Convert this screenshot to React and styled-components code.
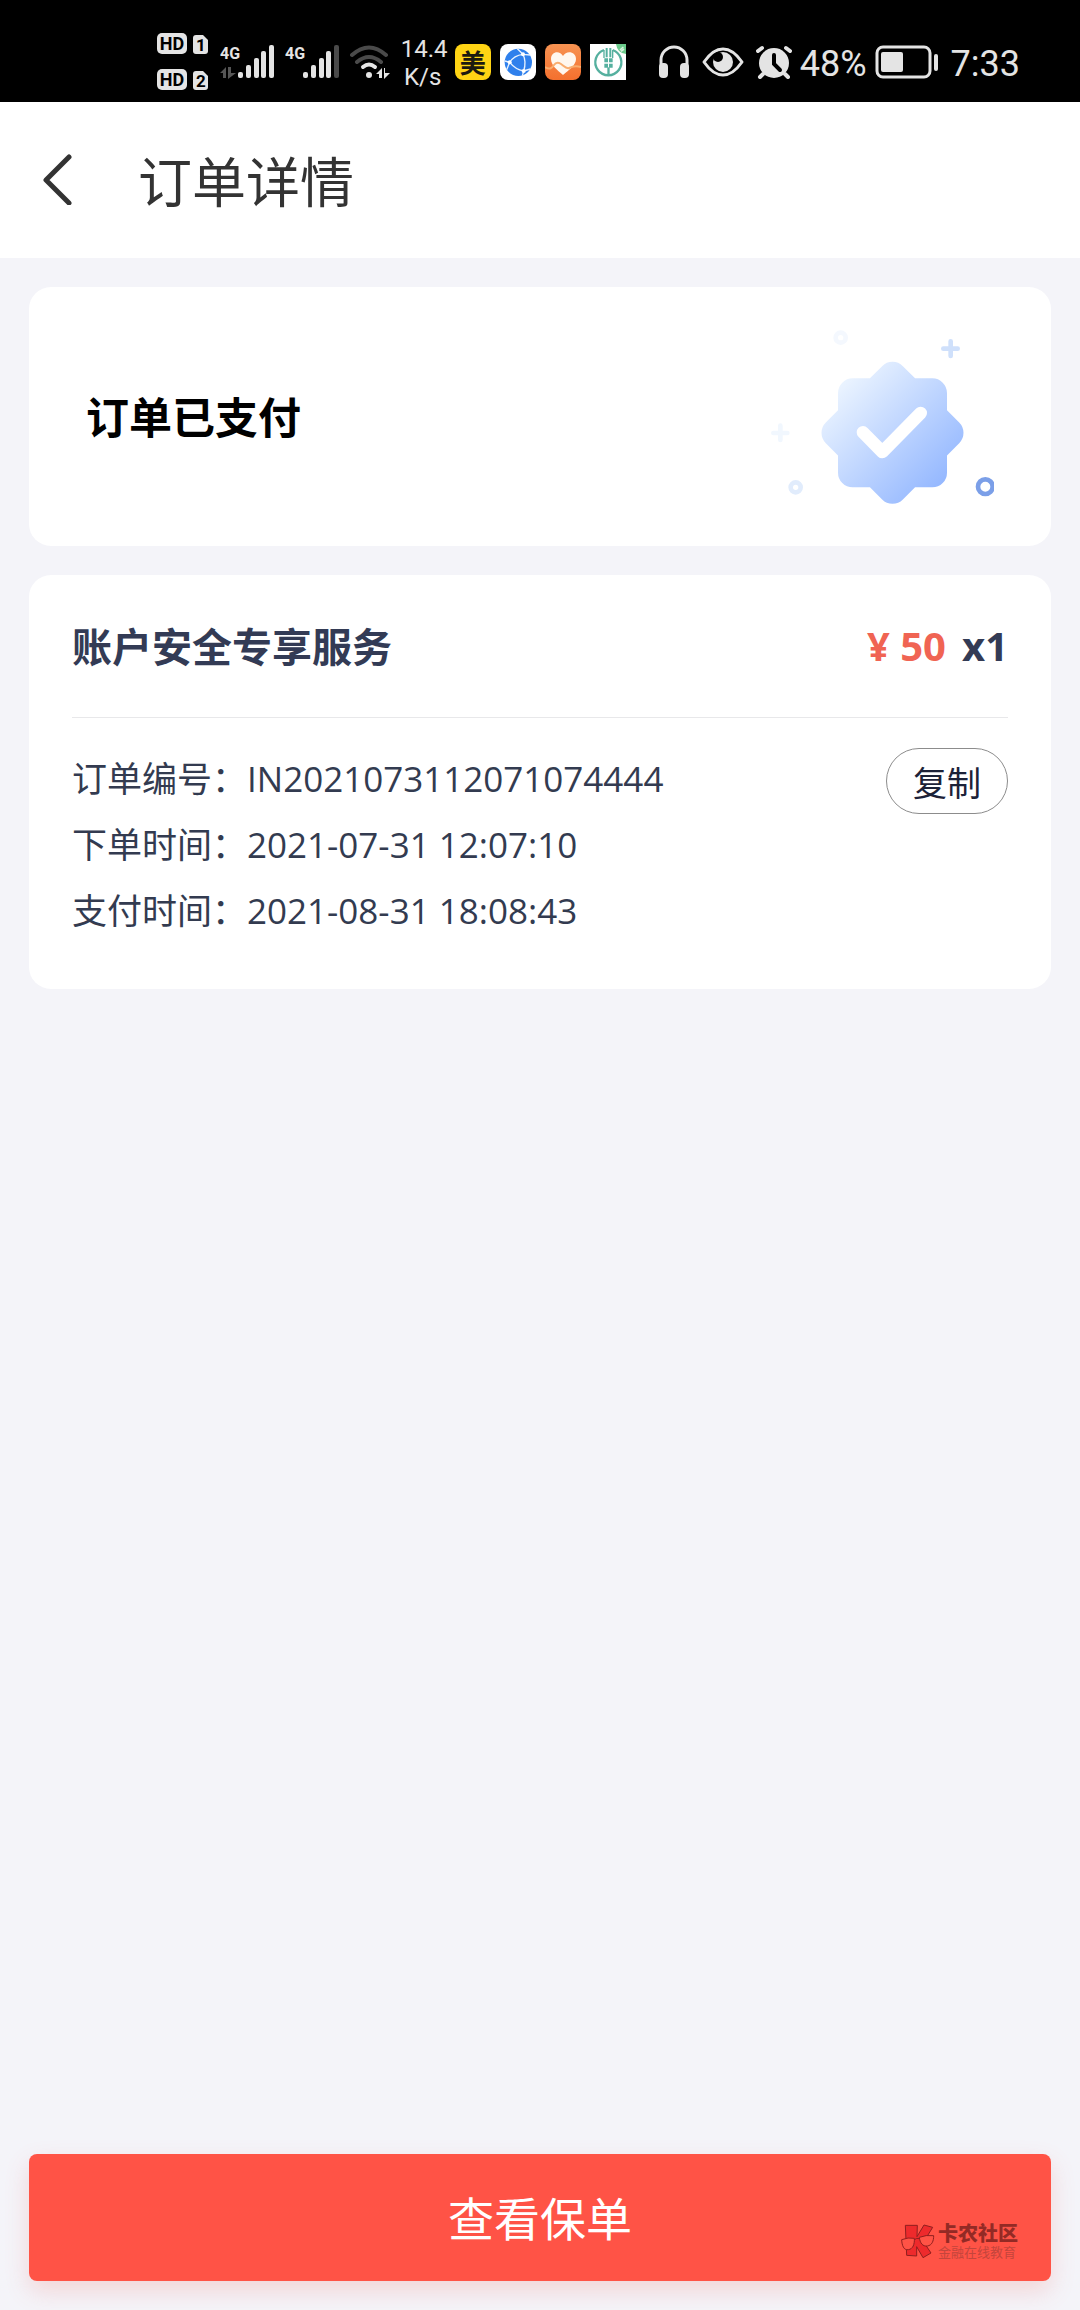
import * as React from 'react'
import styled, { createGlobalStyle } from 'styled-components'

const GlobalStyle = createGlobalStyle`
  * {
    box-sizing: border-box;
  }
  body {
    margin: 0;
    background-color: #f4f4f9;
    font-family: 'Open Sans', 'Noto Sans CJK SC', sans-serif;
  }
  button {
    font-family: inherit;
    cursor: pointer;
  }
  svg {
    display: block;
    flex: none;
  }
`

const Page = styled.div`
  display: flex;
  flex-direction: column;
  min-height: 100vh;
`

const StatusBar = styled.div`
  display: flex;
  justify-content: flex-end;
  align-items: center;
  height: 102px;
  padding: 22px 60px 0 0;
  background-color: #000;
  color: #e4e4e4;
  font-family: Roboto, sans-serif;
`

const StatusGroup = styled.div`
  display: flex;
  align-items: center;
  gap: ${({ $gap }) => $gap}px;
  margin-right: ${({ $after }) => $after}px;
`

const Speed = styled.div`
  width: 44px;
  padding-top: 2px;
  font-size: 24px;
  line-height: 28px;
  text-align: center;
`

const StatusText = styled.span`
  padding-top: 4px;
  font-size: 36px;
  line-height: 40px;
`

const AppIcon = styled.span`
  display: flex;
  align-items: center;
  justify-content: center;
  width: 36px;
  height: 36px;
  border-radius: 8px;
  background-color: #ffd414;
  color: #1c1a10;
  font: 700 26px/36px 'Noto Sans CJK SC', sans-serif;
`

const Header = styled.header`
  display: flex;
  align-items: center;
  gap: 64px;
  height: 156px;
  padding: 4px 40px 0;
  background-color: #fff;
`

const BackButton = styled.button`
  padding: 0 0 6px;
  border: 0;
  background: none;
`

const Title = styled.h1`
  margin: 0;
  color: #333;
  font-size: 54px;
  font-weight: 400;
  line-height: 64px;
`

const Main = styled.main`
  display: flex;
  flex: 1;
  flex-direction: column;
  gap: 29px;
  padding: 29px;
`

const Card = styled.section`
  border-radius: 22px;
  background-color: #fff;
`

const PaidCard = styled(Card)`
  display: flex;
  align-items: center;
  justify-content: space-between;
  height: 259px;
  padding: 0 57px;
`

const PaidText = styled.h2`
  margin: 0;
  padding-top: 3px;
  color: #000;
  font-size: 43px;
  line-height: 52px;
`

const OrderCard = styled(Card)`
  padding: 0 43px 43px;
`

const Product = styled.div`
  display: flex;
  align-items: center;
  justify-content: space-between;
  height: 143px;
  padding-bottom: 2px;
  border-bottom: 1px solid #e8e8ea;
  color: #333b55;
  font-size: 40px;
  font-weight: 700;
`

const ProductName = styled.h2`
  margin: 0;
  font-size: 40px;
`

const Amount = styled.div`
  display: flex;
  gap: 16px;
`

const Price = styled.span`
  color: #f06453;
`

const Details = styled.dl`
  margin: 30px 0 0;
`

const DetailRow = styled.div`
  display: flex;
  align-items: center;
  height: 66px;
  color: #333b50;
  font-size: 35px;
  line-height: 62px;
  dt,
  dd {
    margin: 0;
  }
  dd {
    display: flex;
    flex: 1;
    justify-content: space-between;
  }
  dt,
  dd {
    height: 66px;
  }
`

const CopyButton = styled.button`
  width: 122px;
  height: 66px;
  padding: 0;
  border: 1px solid #8c8c8c;
  border-radius: 33px;
  background-color: #fff;
  color: #1c2238;
  font-size: 34px;
`

const Footer = styled.div`
  position: relative;
  margin-top: auto;
`

const PolicyButton = styled.button`
  width: 100%;
  height: 127px;
  padding: 0 0 3px;
  border: 0;
  border-radius: 8px;
  background-color: #ff5346;
  box-shadow: 0 10px 24px rgba(240, 90, 80, 0.2);
  color: #fff;
  font-size: 46px;
`

const Community = styled.div`
  position: absolute;
  right: 33px;
  bottom: 21px;
  display: flex;
  align-items: center;
  gap: 3px;
  color: #932a25;
  font-family: 'Noto Sans CJK SC', sans-serif;
  pointer-events: none;
`

const CommunityName = styled.div`
  font-size: 20px;
  font-weight: 900;
  line-height: 22px;
`

const CommunityNote = styled.div`
  color: #c4453c;
  font-size: 13px;
  line-height: 16px;
`

const HdIcon = () => (
  <svg width="52" height="58" viewBox="0 0 52 58" fill="#e4e4e4">
    {['1', '2'].map((sim, i) => (
      <g key={sim} transform={`translate(0 ${i * 36})`}>
        <rect width="30" height="21" rx="5" />
        <path d="M39 2h7l5 5v11a3 3 0 0 1-3 3h-9a3 3 0 0 1-3-3V5a3 3 0 0 1 3-3z" />
        <g fill="#000" fontFamily="Roboto, sans-serif" fontWeight="700" textAnchor="middle">
          <text x="15" y="17" fontSize="18">HD</text>
          <text x="44" y="18" fontSize="17">{sim}</text>
        </g>
      </g>
    ))}
  </svg>
)

const SignalIcon = ({ arrows, level }) => (
  <svg width="54" height="34" viewBox="0 0 54 34" fill="#e4e4e4">
    <text x="0" y="14" fontFamily="Roboto, sans-serif" fontSize="16" fontWeight="700">4G</text>
    {arrows && (
      <path fill="#555" d="M0 28l6-6v11H3v-5zM8 22h3v6h5l-8 6z" />
    )}
    {[6, 13, 20, 27, 33].map((height, i) => (
      <rect
        key={height}
        x={18 + i * 8 - (i > 2 ? 1 : 0)}
        y={33 - height}
        width="5"
        height={height}
        rx="2"
        fill={i < level ? '#e4e4e4' : '#4a4a4a'}
      />
    ))}
  </svg>
)

const WifiIcon = () => (
  <svg width="40" height="34" viewBox="0 0 40 34" fill="none" strokeLinecap="round" strokeWidth="4">
    <path stroke="#4a4a4a" d="M2 10Q19-5 36 10M7 17Q19 7 31 17" />
    <path stroke="#e4e4e4" d="M13 22Q19 17 25 22" />
    <circle cx="19" cy="30" r="3" fill="#e4e4e4" />
    <path fill="#e4e4e4" d="M26 29l6-6v10h-3v-4zM34 23h1v5h5l-6 6z" />
  </svg>
)

const GlobeApp = () => (
  <svg width="36" height="36" viewBox="0 0 108 108">
    <rect width="108" height="108" rx="24" fill="#fff" />
    <circle cx="55" cy="55" r="41" fill="#2f80ec" />
    <g fill="none" stroke="#e8f2ff" strokeWidth="4">
      <path d="M69 31Q42 34 29 55M29 55Q46 76 71 81M69 31Q80 54 71 81" />
      <path d="M69 31L52 14M69 31l22 2M29 55l-14-4M29 55l-9 22M71 81l20-6M71 81l-4 15" />
    </g>
    <g fill="#fff">
      <circle cx="69" cy="31" r="6" />
      <circle cx="29" cy="55" r="6" />
      <circle cx="71" cy="81" r="6" />
    </g>
  </svg>
)

const HeartApp = () => (
  <svg width="36" height="36" viewBox="0 0 36 36">
    <defs>
      <linearGradient id="heartTile" x1="0" y1="0" x2="0" y2="1">
        <stop offset="0" stopColor="#f79352" />
        <stop offset="1" stopColor="#f4702e" />
      </linearGradient>
    </defs>
    <rect width="36" height="36" rx="8" fill="url(#heartTile)" />
    <path fill="#fff7ee" d="M18 31C12 26 6 21 6 15c0-8 9-9 12-3 3-6 13-5 13 3 0 6-7 11-13 16z" />
    <path fill="none" stroke="#f9ad6e" strokeWidth="2" d="M0 23c5 3 7 1 9-2s4-3 7-1 5 5 8 4 5-3 12-1" />
  </svg>
)

const BankApp = () => (
  <svg width="36" height="36" viewBox="0 0 108 108">
    <rect width="108" height="108" fill="#fff" />
    <path fill="#6ccb8c" d="M78 0h30v30q-26-2-30-30z" />
    <path fill="none" stroke="#d8f5df" strokeWidth="5" d="M90 18l10-9M93 22l9-7" />
    <g fill="none" stroke="#55b09f" strokeWidth="7">
      <path d="M42 18a39 39 0 1 0 26 0" />
      <path d="M42 18v24M68 18v24" strokeWidth="4" />
    </g>
    <g fill="#55b09f">
      <path d="M47 12h6v28h-6zM58 12h6v28h-6z" />
      <path d="M43 43h11v12H43zM57 43h11v12H57zM43 59h11v12H43zM57 59h11v12H57z" />
      <path d="M52 70h7v26h-7z" />
    </g>
  </svg>
)

const HeadphonesIcon = () => (
  <svg width="32" height="34" viewBox="0 0 32 34">
    <path fill="none" stroke="#e4e4e4" strokeWidth="3" d="M3 26V15a13 13 0 0 1 26 0v11" />
    <rect x="1" y="18" width="9" height="15" rx="4" fill="#e4e4e4" />
    <rect x="22" y="18" width="9" height="15" rx="4" fill="#e4e4e4" />
  </svg>
)

const EyeIcon = () => (
  <svg width="42" height="34" viewBox="0 0 42 34">
    <path fill="none" stroke="#e4e4e4" strokeWidth="3" strokeLinejoin="round" d="M2 17Q11 4 21 4t19 13Q31 30 21 30T2 17z" />
    <circle cx="21" cy="17" r="10" fill="#e4e4e4" />
    <circle cx="16" cy="12" r="5" fill="#000" />
  </svg>
)

const AlarmIcon = () => (
  <svg width="36" height="34" viewBox="0 0 36 34">
    <circle cx="18" cy="18" r="15" fill="#e4e4e4" />
    <g fill="none" stroke="#e4e4e4" strokeWidth="4" strokeLinecap="round">
      <path d="M2 6l4-3M34 6l-4-3M7 29l-3 3M29 29l3 3" />
    </g>
    <path fill="none" stroke="#000" strokeWidth="4" strokeLinecap="round" d="M18 10v9l6 6" />
  </svg>
)

const BatteryIcon = () => (
  <svg width="64" height="34" viewBox="0 0 64 34">
    <rect x="2" y="2" width="53" height="30" rx="6" fill="none" stroke="#e4e4e4" strokeWidth="3" />
    <rect x="6" y="7" width="22" height="20" rx="2" fill="#e4e4e4" />
    <rect x="59" y="9" width="4" height="17" rx="2" fill="#e4e4e4" />
  </svg>
)

const BackIcon = () => (
  <svg width="34" height="52" viewBox="0 0 34 52">
    <path fill="none" stroke="#333" strokeWidth="5" strokeLinecap="round" strokeLinejoin="round" d="M29 4L6 27l23 23" />
  </svg>
)

// Seal made of two rounded squares, one turned by 45 degrees
const PaidSeal = () => (
  <svg width="224" height="180" viewBox="90 170 672 540">
    <defs>
      <linearGradient id="seal" gradientUnits="userSpaceOnUse" x1="290" y1="350" x2="610" y2="660">
        <stop offset="0" stopColor="#ebf4ff" />
        <stop offset="1" stopColor="#92b6ff" />
      </linearGradient>
      <clipPath id="sealShape">
        <rect x="294" y="324" width="327" height="327" rx="44" />
        <rect x="294" y="324" width="327" height="327" rx="44" transform="rotate(45 457.5 487.5)" />
      </clipPath>
    </defs>
    <rect x="240" y="270" width="440" height="440" fill="url(#seal)" clipPath="url(#sealShape)" />
    <path
      fill="none"
      stroke="#fff"
      strokeWidth="38"
      strokeLinecap="round"
      strokeLinejoin="round"
      d="M369 486l58 59 115-117"
    />
    <g fill="none" strokeWidth="14" strokeLinecap="round">
      <path stroke="#cfe0fb" d="M610 235h43M632 213v44" />
      <path stroke="#f1f7fe" d="M100 488h42M121 466v43" />
      <circle cx="302" cy="202" r="15" stroke="#f4f8fe" />
      <circle cx="167" cy="651" r="15" stroke="#e1ecfc" />
      <circle cx="736" cy="649" r="22" stroke="#7b9fe8" />
    </g>
  </svg>
)

const CommunityLogo = () => (
  <svg width="34" height="36" viewBox="0 0 102 108" stroke="#8f1f1f" strokeWidth="3" strokeLinejoin="round">
    <path fill="#ee2a2c" d="M13 7h36l-1 34L69 6l26 7-27 44 22 33-24 14-19-33v28l-30-2z" />
    <path fill="#ff5346" d="M2 50q20-8 38-4c1 18-4 32-18 34S3 68 2 50zM55 43q20-8 43-5c0 16-5 29-19 31S57 60 55 43z" />
    <path fill="none" d="M40 50q7-6 15-3" />
  </svg>
)

const details = [
  { label: '订单编号', value: 'IN2021073112071074444', copy: true },
  { label: '下单时间', value: '2021-07-31 12:07:10' },
  { label: '支付时间', value: '2021-08-31 18:08:43' },
]

export default function App() {
  return (
    <>
      <GlobalStyle />
      <Page>
        <StatusBar>
          <StatusGroup $gap={11} $after={10}>
            <HdIcon />
            <SignalIcon arrows level={5} />
            <SignalIcon level={4} />
            <WifiIcon />
            <Speed>
              14.4
              <br />
              K/s
            </Speed>
          </StatusGroup>
          <StatusGroup $gap={9} $after={32}>
            <AppIcon>美</AppIcon>
            <GlobeApp />
            <HeartApp />
            <BankApp />
          </StatusGroup>
          <StatusGroup $gap={12} $after={8}>
            <HeadphonesIcon />
            <EyeIcon />
            <AlarmIcon />
          </StatusGroup>
          <StatusGroup $gap={8} $after={12}>
            <StatusText>48%</StatusText>
            <BatteryIcon />
          </StatusGroup>
          <StatusText>7:33</StatusText>
        </StatusBar>
        <Header>
          <BackButton aria-label="返回">
            <BackIcon />
          </BackButton>
          <Title>订单详情</Title>
        </Header>
        <Main>
          <PaidCard>
            <PaidText>订单已支付</PaidText>
            <PaidSeal />
          </PaidCard>
          <OrderCard>
            <Product>
              <ProductName>账户安全专享服务</ProductName>
              <Amount>
                <Price>¥ 50</Price>
                <span>x1</span>
              </Amount>
            </Product>
            <Details>
              {details.map(({ label, value, copy }) => (
                <DetailRow key={label}>
                  <dt>{label}：</dt>
                  <dd>
                    {value}
                    {copy && <CopyButton>复制</CopyButton>}
                  </dd>
                </DetailRow>
              ))}
            </Details>
          </OrderCard>
          <Footer>
            <PolicyButton>查看保单</PolicyButton>
            <Community>
              <CommunityLogo />
              <div>
                <CommunityName>卡农社区</CommunityName>
                <CommunityNote>金融在线教育</CommunityNote>
              </div>
            </Community>
          </Footer>
        </Main>
      </Page>
    </>
  )
}
